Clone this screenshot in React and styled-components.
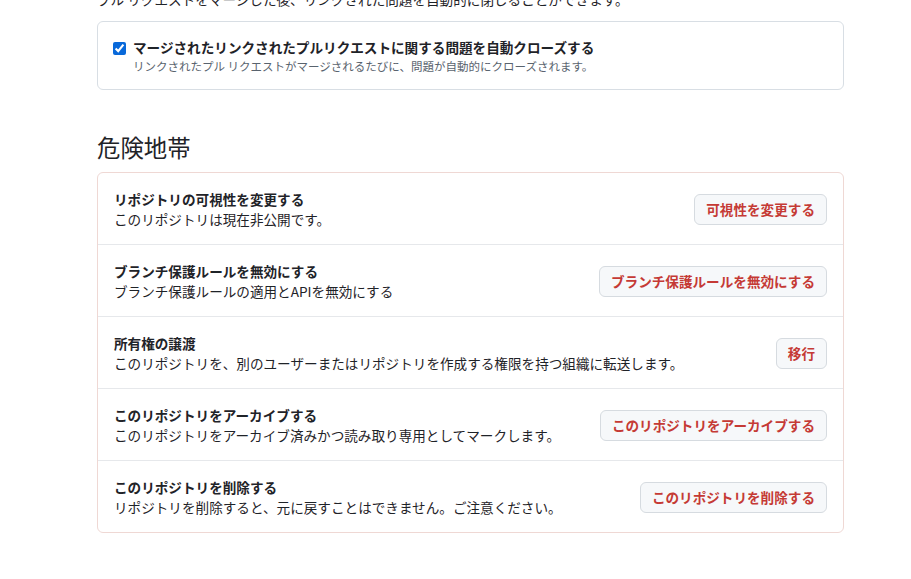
import React from 'react'
import styled, { createGlobalStyle } from 'styled-components'

const GlobalStyle = createGlobalStyle`
  html, body {
    margin: 0;
    padding: 0;
    background: #ffffff;
    overflow: hidden;
  }
  body {
    font-family: "Noto Sans CJK JP", "Noto Sans", "Liberation Sans", sans-serif;
    color: #1f2328;
  }
`

const Page = styled.div`
  width: 747px;
  margin-left: 97px;
`

const Lead = styled.p`
  margin: -11px 0 11px;
  font-size: 13.6px;
  line-height: 21px;
  color: #1f2328;
  white-space: nowrap;
`

const OptionBox = styled.div`
  border: 1px solid #d8dee4;
  border-radius: 6px;
  padding: 15px 16px 14px 15px;
  display: flex;
  align-items: flex-start;
  gap: 7px;
`

const Check = styled.input`
  margin: 5px 0 0;
  width: 13px;
  height: 13px;
  accent-color: #0969da;
  flex: none;
`

const OptionText = styled.div`
  display: flex;
  flex-direction: column;
`

const OptionLabel = styled.label`
  font-size: 13.6px;
  line-height: 20px;
  font-weight: 700;
  color: #1f2328;
`

const OptionNote = styled.span`
  font-size: 11.5px;
  line-height: 18px;
  color: #59636e;
`

const Heading = styled.h2`
  margin: 39px 0 7px;
  font-size: 23.4px;
  line-height: 36px;
  font-weight: 400;
  color: #1f2328;
`

const DangerBox = styled.div`
  border: 1px solid #efd8d4;
  border-radius: 6px;
`

const Row = styled.div`
  display: flex;
  align-items: center;
  justify-content: space-between;
  padding: 16px 16px 15px;
  & + & {
    border-top: 1px solid #e6e8eb;
  }
`

const RowText = styled.div`
  display: flex;
  flex-direction: column;
`

const RowTitle = styled.strong`
  font-size: 13.6px;
  line-height: 20px;
  font-weight: 700;
`

const RowDesc = styled.span`
  font-size: 13.6px;
  line-height: 20px;
`

const DangerButton = styled.button`
  height: 31px;
  padding: 0 11px;
  border: 1px solid #d6dbe0;
  border-radius: 6px;
  background: #f6f8fa;
  color: #c53a35;
  font-family: inherit;
  font-size: 13.6px;
  font-weight: 700;
  white-space: nowrap;
  cursor: pointer;
  flex: none;
`

const rows = [
  {
    title: 'リポジトリの可視性を変更する',
    desc: 'このリポジトリは現在非公開です。',
    action: '可視性を変更する',
  },
  {
    title: 'ブランチ保護ルールを無効にする',
    desc: 'ブランチ保護ルールの適用とAPIを無効にする',
    action: 'ブランチ保護ルールを無効にする',
  },
  {
    title: '所有権の譲渡',
    desc: 'このリポジトリを、別のユーザーまたはリポジトリを作成する権限を持つ組織に転送します。',
    action: '移行',
  },
  {
    title: 'このリポジトリをアーカイブする',
    desc: 'このリポジトリをアーカイブ済みかつ読み取り専用としてマークします。',
    action: 'このリポジトリをアーカイブする',
  },
  {
    title: 'このリポジトリを削除する',
    desc: 'リポジトリを削除すると、元に戻すことはできません。ご注意ください。',
    action: 'このリポジトリを削除する',
  },
]

export default function App() {
  return (
    <Page>
      <GlobalStyle />
      <Lead>プル リクエストをマージした後、リンクされた問題を自動的に閉じることができます。</Lead>
      <OptionBox>
        <Check type="checkbox" id="autoclose" defaultChecked />
        <OptionText>
          <OptionLabel htmlFor="autoclose">マージされたリンクされたプルリクエストに関する問題を自動クローズする</OptionLabel>
          <OptionNote>リンクされたプル リクエストがマージされるたびに、問題が自動的にクローズされます。</OptionNote>
        </OptionText>
      </OptionBox>

      <Heading>危険地帯</Heading>
      <DangerBox>
        {rows.map(r => (
          <Row key={r.title}>
            <RowText>
              <RowTitle>{r.title}</RowTitle>
              <RowDesc>{r.desc}</RowDesc>
            </RowText>
            <DangerButton>{r.action}</DangerButton>
          </Row>
        ))}
      </DangerBox>
    </Page>
  )
}
